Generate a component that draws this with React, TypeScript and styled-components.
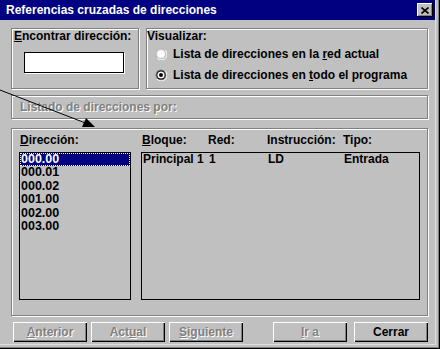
import React from 'react';
import styled, { createGlobalStyle } from 'styled-components';

const Global = createGlobalStyle`
  html, body { margin: 0; padding: 0; background: #c0c0c0; }
  body {
    font-family: "Liberation Sans", Arial, sans-serif;
    font-size: 12px;
    font-weight: bold;
    color: #000;
  }
`;

const Window = styled.div`
  position: relative;
  width: 440px;
  height: 349px;
  box-sizing: border-box;
  background: #c0c0c0;
  padding: 0 5px 3px 0;
  display: flex;
  flex-direction: column;
  box-shadow: inset -1px -1px 0 #000, inset -2px -2px 0 #808080, inset -4px -4px 0 #c0c0c0, inset -5px -5px 0 #dfdfdf;
`;

const TitleBar = styled.div`
  flex: none;
  height: 20px;
  background: #000080;
  color: #fff;
  display: flex;
  align-items: center;
  justify-content: space-between;
  padding: 0 2px 0 6px;
  font-size: 12px;
  line-height: 14px;
`;

const CloseButton = styled.div`
  width: 16px;
  height: 14px;
  box-sizing: border-box;
  background: #c0c0c0;
  display: flex;
  align-items: center;
  justify-content: center;
  box-shadow: inset -1px -1px 0 #000, inset 1px 1px 0 #fff, inset -2px -2px 0 #808080;
`;

const Body = styled.div`
  flex: 1;
  display: flex;
  flex-direction: column;
  padding: 8px 7px 0 11px;
`;

const TopRow = styled.div`
  display: flex;
  gap: 7px;
  height: 61px;
`;

const GroupBox = styled.div<{ $width?: number }>`
  box-sizing: border-box;
  border: 1px solid #808080;
  box-shadow: inset 1px 1px 0 #fff, 1px 1px 0 #fff;
  ${(p) => (p.$width ? `width: ${p.$width}px; flex: none;` : 'flex: 1;')}
  display: flex;
  flex-direction: column;
`;

const Label = styled.div<{ $indent?: number }>`
  height: 14px;
  line-height: 14px;
  padding-left: ${(p) => p.$indent ?? 0}px;
  white-space: nowrap;
`;

const TextInput = styled.div`
  margin: 9px 0 0 12px;
  width: 100px;
  height: 21px;
  box-sizing: border-box;
  background: #fff;
  border: 1px solid #000;
  box-shadow: 1px 1px 0 #fff;
`;

const RadioRow = styled.div`
  height: 21px;
  display: flex;
  align-items: center;
  gap: 6px;
  padding-left: 8px;
  white-space: nowrap;
`;

const DisabledPanel = styled.div`
  margin-top: 6px;
  height: 24px;
  box-sizing: border-box;
  border: 1px solid #808080;
  box-shadow: inset 1px 1px 0 #fff, 1px 1px 0 #fff;
  display: flex;
  align-items: center;
  padding-left: 8px;
`;

const Disabled = styled.span`
  color: #808080;
  text-shadow: 1px 1px 0 #fff;
`;

const ListGroup = styled.div`
  margin-top: 9px;
  height: 188px;
  box-sizing: border-box;
  border: 1px solid #808080;
  box-shadow: inset 1px 1px 0 #fff, 1px 1px 0 #fff;
  display: grid;
  grid-template-columns: 112px 279px;
  grid-template-rows: 14px 148px;
  column-gap: 10px;
  row-gap: 5px;
  padding: 4px 7px 0 7px;
`;

const ListBox = styled.div`
  box-sizing: border-box;
  border: 1px solid #000;
  padding: 0;
  overflow: hidden;
`;

const ListItem = styled.div<{ $selected?: boolean }>`
  height: 13.4px;
  line-height: 13.4px;
  font-size: 12.5px;
  padding-left: 1px;
  white-space: nowrap;
  overflow: hidden;
  ${(p) =>
    p.$selected
      ? `background: #000080; color: #fff; outline: 1px dotted #ffffa0; outline-offset: -1px;`
      : ''}
`;

const Columns = styled.div`
  display: grid;
  grid-template-columns: 66px 59px 76px 1fr;
  padding-left: 1px;
  white-space: nowrap;
  line-height: 14px;
`;

const DataRow = styled(Columns)`
  line-height: 13.4px;
  height: 13.4px;
`;

const ButtonRow = styled.div`
  margin-top: 6px;
  display: flex;
  justify-content: space-between;
  padding-left: 2px;
`;

const ButtonGroup = styled.div<{ $gap: number }>`
  display: flex;
  gap: ${(p) => p.$gap}px;
`;

const Button = styled.div<{ $w: number }>`
  width: ${(p) => p.$w}px;
  height: 20px;
  box-sizing: border-box;
  background: #c0c0c0;
  display: flex;
  align-items: center;
  justify-content: center;
  box-shadow: inset 1px 1px 0 #fff, inset -1px -1px 0 #000, inset -2px -2px 0 #808080;
`;

const ArrowLayer = styled.svg`
  position: absolute;
  left: 0;
  top: 85px;
  pointer-events: none;
`;

const Radio = ({ checked }: { checked?: boolean }) => (
  <svg width="12" height="12" viewBox="0 0 12 12">
    <circle cx="6" cy="6" r="5.5" fill={checked ? '#808080' : '#b8b8b8'} />
    <path d="M10.3 2.2 A5.5 5.5 0 0 1 2.2 10.3" stroke="#fff" strokeWidth="1" fill="none" />
    <circle cx="6" cy="6" r="4.5" fill={checked ? '#000' : '#e4e4e4'} />
    <circle cx="6" cy="6" r="3.6" fill="#fff" />
    {checked && <circle cx="6" cy="6" r="2" fill="#000" />}
  </svg>
);

export default function App() {
  return (
    <>
      <Global />
      <Window>
        <TitleBar>
          <span>Referencias cruzadas de direcciones</span>
          <CloseButton>
            <svg width="8" height="7" viewBox="0 0 8 7">
              <path d="M0.5 0.5 L7.5 6.5 M7.5 0.5 L0.5 6.5" stroke="#000" strokeWidth="1.6" />
            </svg>
          </CloseButton>
        </TitleBar>
        <Body>
          <TopRow>
            <GroupBox $width={128}>
              <Label $indent={2}>
                <u>E</u>ncontrar dirección:
              </Label>
              <TextInput />
            </GroupBox>
            <GroupBox>
              <Label>Visualizar:</Label>
              <RadioRow>
                <Radio />
                <span>
                  Lista de direcciones en la <u>r</u>ed actual
                </span>
              </RadioRow>
              <RadioRow>
                <Radio checked />
                <span>
                  Lista de direcciones en <u>t</u>odo el programa
                </span>
              </RadioRow>
            </GroupBox>
          </TopRow>
          <DisabledPanel>
            <Disabled>Listado de direcciones por:</Disabled>
          </DisabledPanel>
          <ListGroup>
            <Label $indent={1}>
              <u>D</u>irección:
            </Label>
            <Columns>
              <span>
                <u>B</u>loque:
              </span>
              <span>Red:</span>
              <span>Instrucción:</span>
              <span>Tipo:</span>
            </Columns>
            <ListBox>
              {['000.00', '000.01', '000.02', '001.00', '002.00', '003.00'].map((v, i) => (
                <ListItem key={v} $selected={i === 0}>
                  {v}
                </ListItem>
              ))}
            </ListBox>
            <ListBox>
              <DataRow>
                <span>Principal 1</span>
                <span>1</span>
                <span>LD</span>
                <span>Entrada</span>
              </DataRow>
            </ListBox>
          </ListGroup>
          <ButtonRow>
            <ButtonGroup $gap={4}>
              <Button $w={74}>
                <Disabled>
                  <u>A</u>nterior
                </Disabled>
              </Button>
              <Button $w={74}>
                <Disabled>
                  Act<u>u</u>al
                </Disabled>
              </Button>
              <Button $w={74}>
                <Disabled>
                  <u>S</u>iguiente
                </Disabled>
              </Button>
            </ButtonGroup>
            <ButtonGroup $gap={7}>
              <Button $w={74}>
                <Disabled>
                  <u>I</u>r a
                </Disabled>
              </Button>
              <Button $w={74}>Cerrar</Button>
            </ButtonGroup>
          </ButtonRow>
        </Body>
        <ArrowLayer width="100" height="45" viewBox="0 0 100 45">
          <line x1="0" y1="5" x2="88" y2="39" stroke="#000" strokeWidth="1" />
          <polygon points="95,42 82,42 86,33" fill="#000" />
        </ArrowLayer>
      </Window>
    </>
  );
}
